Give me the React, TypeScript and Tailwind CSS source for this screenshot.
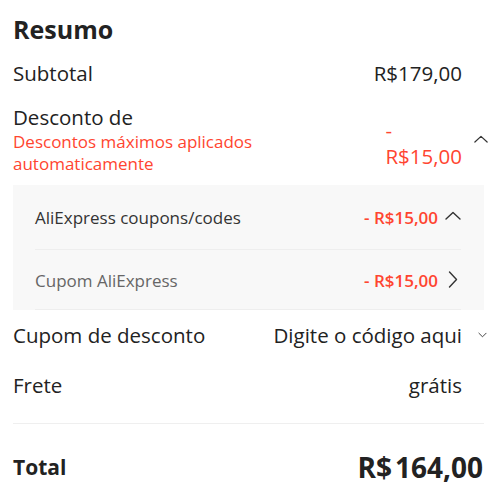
const RED = "text-[#ff4530]";

function ChevronUp({ className = "" }: { className?: string }) {
  return (
    <svg viewBox="0 0 16 9" className={className} fill="none">
      <path d="M1 8L8 1.5L15 8" stroke="#333" strokeWidth="1.4" strokeLinecap="round" strokeLinejoin="round" />
    </svg>
  );
}

function ChevronRight({ className = "" }: { className?: string }) {
  return (
    <svg viewBox="0 0 10 17" className={className} fill="none">
      <path d="M1.5 1L8.5 8.5L1.5 16" stroke="#333" strokeWidth="1.4" strokeLinecap="round" strokeLinejoin="round" />
    </svg>
  );
}

function ChevronDown({ className = "" }: { className?: string }) {
  return (
    <svg viewBox="0 0 10 6" className={className} fill="none">
      <path d="M1 1L5 5L9 1" stroke="#333" strokeWidth="1" strokeLinecap="round" strokeLinejoin="round" />
    </svg>
  );
}

export default function App() {
  return (
    <div
      className="w-[500px] h-[494px] bg-white pl-[13px] pr-[12px] pt-[13px] text-[#222]"
      style={{ fontFamily: '"Open Sans", "Noto Sans", sans-serif' }}
    >
      <h2 className="text-[25px] leading-[32px] font-bold">Resumo</h2>

      {/* Subtotal */}
      <div className="mt-[14px] flex items-center justify-between text-[20.5px] leading-[28px]">
        <span>Subtotal</span>
        <div className="flex items-center">
          <span>R$179,00</span>
          <span className="w-[26px]" />
        </div>
      </div>

      {/* Desconto */}
      <div className="mt-[16px] flex items-center justify-between">
        <div>
          <div className="text-[20.5px] leading-[28px]">Desconto de</div>
          <div className={`text-[17px] leading-[22px] ${RED}`}>
            Descontos máximos aplicados
            <br />
            automaticamente
          </div>
        </div>
        <div className="flex items-center">
          <div className={`text-[20.5px] leading-[26px] ${RED} mt-[8px]`}>
            <div>-</div>
            <div>R$15,00</div>
          </div>
          <div className="ml-[12px] w-[14px] flex items-center">
            <ChevronUp className="w-[14px] h-[8px]" />
          </div>
        </div>
      </div>

      {/* Detalhes dos descontos */}
      <div className="mt-[10px] mr-[4px] bg-[#f8f8f8] pl-[22px] pr-[23px]">
        <div className="h-[65px] flex items-center justify-between border-b border-[#eeeeee] pt-[2px]">
          <span className="text-[17px] text-[#333]">AliExpress coupons/codes</span>
          <div className="flex items-center">
            <span className={`text-[17px] font-semibold ${RED}`}>- R$15,00</span>
            <div className="ml-[7px] w-[16px] flex justify-center -mt-[6px]">
              <ChevronUp className="w-[16px] h-[9px]" />
            </div>
          </div>
        </div>
        <div className="h-[60px] flex items-center justify-between border-b border-[#eeeeee] pt-[2px]">
          <span className="text-[17px] text-[#666]">Cupom AliExpress</span>
          <div className="flex items-center">
            <span className={`text-[17px] font-semibold ${RED}`}>- R$15,00</span>
            <div className="ml-[7px] w-[16px] flex justify-center -mt-[2px]">
              <ChevronRight className="w-[10px] h-[17px]" />
            </div>
          </div>
        </div>
      </div>

      {/* Cupom de desconto */}
      <div className="mt-[11px] flex items-center justify-between text-[20.5px] leading-[28px]">
        <span>Cupom de desconto</span>
        <div className="flex items-center">
          <span>Digite o código aqui</span>
          <div className="w-[26px] flex justify-end pr-[1px]">
            <ChevronDown className="w-[9px] h-[6px]" />
          </div>
        </div>
      </div>

      {/* Frete */}
      <div className="mt-[22px] flex items-center justify-between text-[20.5px] leading-[28px]">
        <span>Frete</span>
        <div className="flex items-center">
          <span>grátis</span>
          <span className="w-[26px]" />
        </div>
      </div>

      <div className="mt-[24px] mr-[4px] border-t border-[#efefef]" />

      {/* Total */}
      <div className="mt-[25px] mr-[5px] flex items-center justify-between">
        <span className="text-[21px] leading-[36px] font-bold">Total</span>
        <span className="text-[28px] leading-[36px] font-bold">
          R$<span className="ml-[3px]">164,00</span>
        </span>
      </div>
    </div>
  );
}
